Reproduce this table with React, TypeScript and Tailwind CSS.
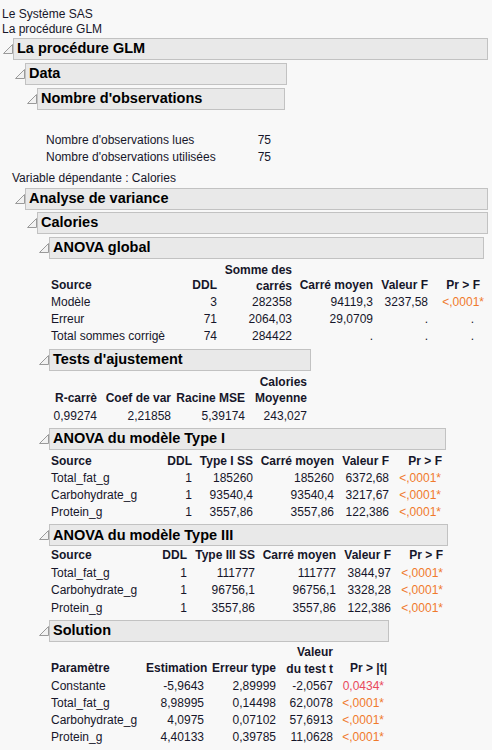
import React from 'react';

const Tri = () => (
    <svg width="10" height="10" viewBox="0 0 10 10" className="shrink-0">
        <polygon points="0.5,9.5 9.5,9.5 9.5,0.5" fill="#f2f2f2" stroke="#9a9a9a" strokeWidth="1" />
    </svg>
);

interface HeaderProps {
    title: string;
    className: string;
}

// outline node header: disclosure triangle + grey title box
const Header: React.FC<HeaderProps> = ({ title, className }) => (
    <div className={`flex items-center ${className}`}>
        <Tri />
        <div className="h-[22px] flex-1 bg-[#e9e9e9] border border-[#c2c2c2] flex items-center pl-[3px] text-[14.5px] font-bold text-black">
            {title}
        </div>
    </div>
);

const orange = 'text-[#f07a2c]';
const red = 'text-[#e9485c]';

export default function App() {
    return (
        <div
            className="min-h-[750px] w-[492px] bg-[#f8f8f8] text-[12px] text-[#16162a] overflow-hidden"
            style={{ fontFamily: '"Liberation Sans", Arial, sans-serif' }}
        >
            <div className="pt-[7px] pl-[2px] leading-[15px]">
                <div>Le Système SAS</div>
                <div>La procédure GLM</div>
            </div>

            <Header title="La procédure GLM" className="mt-[1px] ml-[3px] w-[485px]" />
            <Header title="Data" className="mt-[3px] ml-[15px] w-[272px]" />
            <Header title="Nombre d'observations" className="mt-[3px] ml-[27px] w-[258px]" />

            <div className="mt-[22px] ml-[46px] grid grid-cols-[190px_35px] leading-[17px]">
                <div>Nombre d'observations lues</div>
                <div className="text-right">75</div>
                <div>Nombre d'observations utilisées</div>
                <div className="text-right">75</div>
            </div>

            <div className="mt-[4px] ml-[12px] leading-[17px]">Variable dépendante : Calories</div>

            <Header title="Analyse de variance" className="mt-[1px] ml-[15px] w-[473px]" />
            <Header title="Calories" className="mt-[2px] ml-[27px] w-[461px]" />

            {/* ANOVA global */}
            <Header title="ANOVA global" className="mt-[3px] ml-[39px] w-[445px]" />
            <div className="mt-[3px] ml-[51px] grid grid-cols-[130px_36px_75px_81px_55px_56px] leading-[17.2px]">
                <div className="font-bold self-end">Source</div>
                <div className="font-bold self-end text-right">DDL</div>
                <div className="font-bold text-right leading-[16px]">Somme des<br />carrés</div>
                <div className="font-bold self-end text-right">Carré moyen</div>
                <div className="font-bold self-end text-right">Valeur F</div>
                <div className="font-bold self-end text-right pr-[4px]">Pr &gt; F</div>

                <div>Modèle</div>
                <div className="text-right">3</div>
                <div className="text-right">282358</div>
                <div className="text-right">94119,3</div>
                <div className="text-right">3237,58</div>
                <div className={`text-right ${orange}`}>&lt;,0001*</div>

                <div>Erreur</div>
                <div className="text-right">71</div>
                <div className="text-right">2064,03</div>
                <div className="text-right">29,0709</div>
                <div className="text-right">.</div>
                <div className="text-right pr-[10px]">.</div>

                <div>Total sommes corrigè</div>
                <div className="text-right">74</div>
                <div className="text-right">284422</div>
                <div className="text-right">.</div>
                <div className="text-right">.</div>
                <div className="text-right pr-[10px]">.</div>
            </div>

            {/* Tests d'ajustement */}
            <Header title="Tests d'ajustement" className="mt-[3px] ml-[39px] w-[272px]" />
            <div className="mt-[3px] ml-[51px] grid grid-cols-[46px_74px_74px_62px] leading-[16.5px]">
                <div className="font-bold self-end text-right">R-carrè</div>
                <div className="font-bold self-end text-right">Coef de var</div>
                <div className="font-bold self-end text-right">Racine MSE</div>
                <div className="font-bold text-right">Calories<br />Moyenne</div>
                <div className="text-right leading-[19px]">0,99274</div>
                <div className="text-right leading-[19px]">2,21858</div>
                <div className="text-right leading-[19px]">5,39174</div>
                <div className="text-right leading-[19px]">243,027</div>
            </div>

            {/* Type I */}
            <Header title="ANOVA du modèle Type I" className="mt-[2px] ml-[39px] w-[407px]" />
            <div className="mt-[3px] ml-[51px] grid grid-cols-[105px_36px_61px_81px_55px_53px] leading-[17.2px]">
                <div className="font-bold">Source</div>
                <div className="font-bold text-right">DDL</div>
                <div className="font-bold text-right">Type I SS</div>
                <div className="font-bold text-right">Carré moyen</div>
                <div className="font-bold text-right">Valeur F</div>
                <div className="font-bold text-right">Pr &gt; F</div>
                {[
                    ['Total_fat_g', '1', '185260', '185260', '6372,68'],
                    ['Carbohydrate_g', '1', '93540,4', '93540,4', '3217,67'],
                    ['Protein_g', '1', '3557,86', '3557,86', '122,386'],
                ].map((r) => (
                    <React.Fragment key={r[0]}>
                        <div>{r[0]}</div>
                        <div className="text-right">{r[1]}</div>
                        <div className="text-right">{r[2]}</div>
                        <div className="text-right">{r[3]}</div>
                        <div className="text-right">{r[4]}</div>
                        <div className={`text-right pr-[1px] ${orange}`}>&lt;,0001*</div>
                    </React.Fragment>
                ))}
            </div>

            {/* Type III */}
            <Header title="ANOVA du modèle Type III" className="mt-[3px] ml-[39px] w-[409px]" />
            <div className="mt-[1px] ml-[51px] grid grid-cols-[100px_36px_68px_81px_55px_52px] leading-[17.4px]">
                <div className="font-bold">Source</div>
                <div className="font-bold text-right">DDL</div>
                <div className="font-bold text-right">Type III SS</div>
                <div className="font-bold text-right">Carré moyen</div>
                <div className="font-bold text-right">Valeur F</div>
                <div className="font-bold text-right">Pr &gt; F</div>
                {[
                    ['Total_fat_g', '1', '111777', '111777', '3844,97'],
                    ['Carbohydrate_g', '1', '96756,1', '96756,1', '3328,28'],
                    ['Protein_g', '1', '3557,86', '3557,86', '122,386'],
                ].map((r) => (
                    <React.Fragment key={r[0]}>
                        <div>{r[0]}</div>
                        <div className="text-right">{r[1]}</div>
                        <div className="text-right">{r[2]}</div>
                        <div className="text-right">{r[3]}</div>
                        <div className="text-right">{r[4]}</div>
                        <div className={`text-right ${orange}`}>&lt;,0001*</div>
                    </React.Fragment>
                ))}
            </div>

            {/* Solution */}
            <Header title="Solution" className="mt-[3px] ml-[39px] w-[350px]" />
            <div className="mt-[2px] ml-[51px] grid grid-cols-[95px_58px_72px_57px_54px] leading-[17px]">
                <div className="font-bold self-end">Paramètre</div>
                <div className="font-bold self-end text-right">Estimation</div>
                <div className="font-bold self-end text-right">Erreur type</div>
                <div className="font-bold text-right leading-[16.5px]">Valeur<br />du test t</div>
                <div className="font-bold self-end text-right">Pr &gt; |t|</div>

                <div className="pt-[1px]">Constante</div>
                <div className="pt-[1px] text-right">-5,9643</div>
                <div className="pt-[1px] text-right">2,89999</div>
                <div className="pt-[1px] text-right">-2,0567</div>
                <div className={`pt-[1px] text-right pr-[3px] ${red}`}>0,0434*</div>
                {[
                    ['Total_fat_g', '8,98995', '0,14498', '62,0078'],
                    ['Carbohydrate_g', '4,0975', '0,07102', '57,6913'],
                    ['Protein_g', '4,40133', '0,39785', '11,0628'],
                ].map((r) => (
                    <React.Fragment key={r[0]}>
                        <div>{r[0]}</div>
                        <div className="text-right">{r[1]}</div>
                        <div className="text-right">{r[2]}</div>
                        <div className="text-right">{r[3]}</div>
                        <div className={`text-right pr-[3px] ${orange}`}>&lt;,0001*</div>
                    </React.Fragment>
                ))}
            </div>
        </div>
    );
}
